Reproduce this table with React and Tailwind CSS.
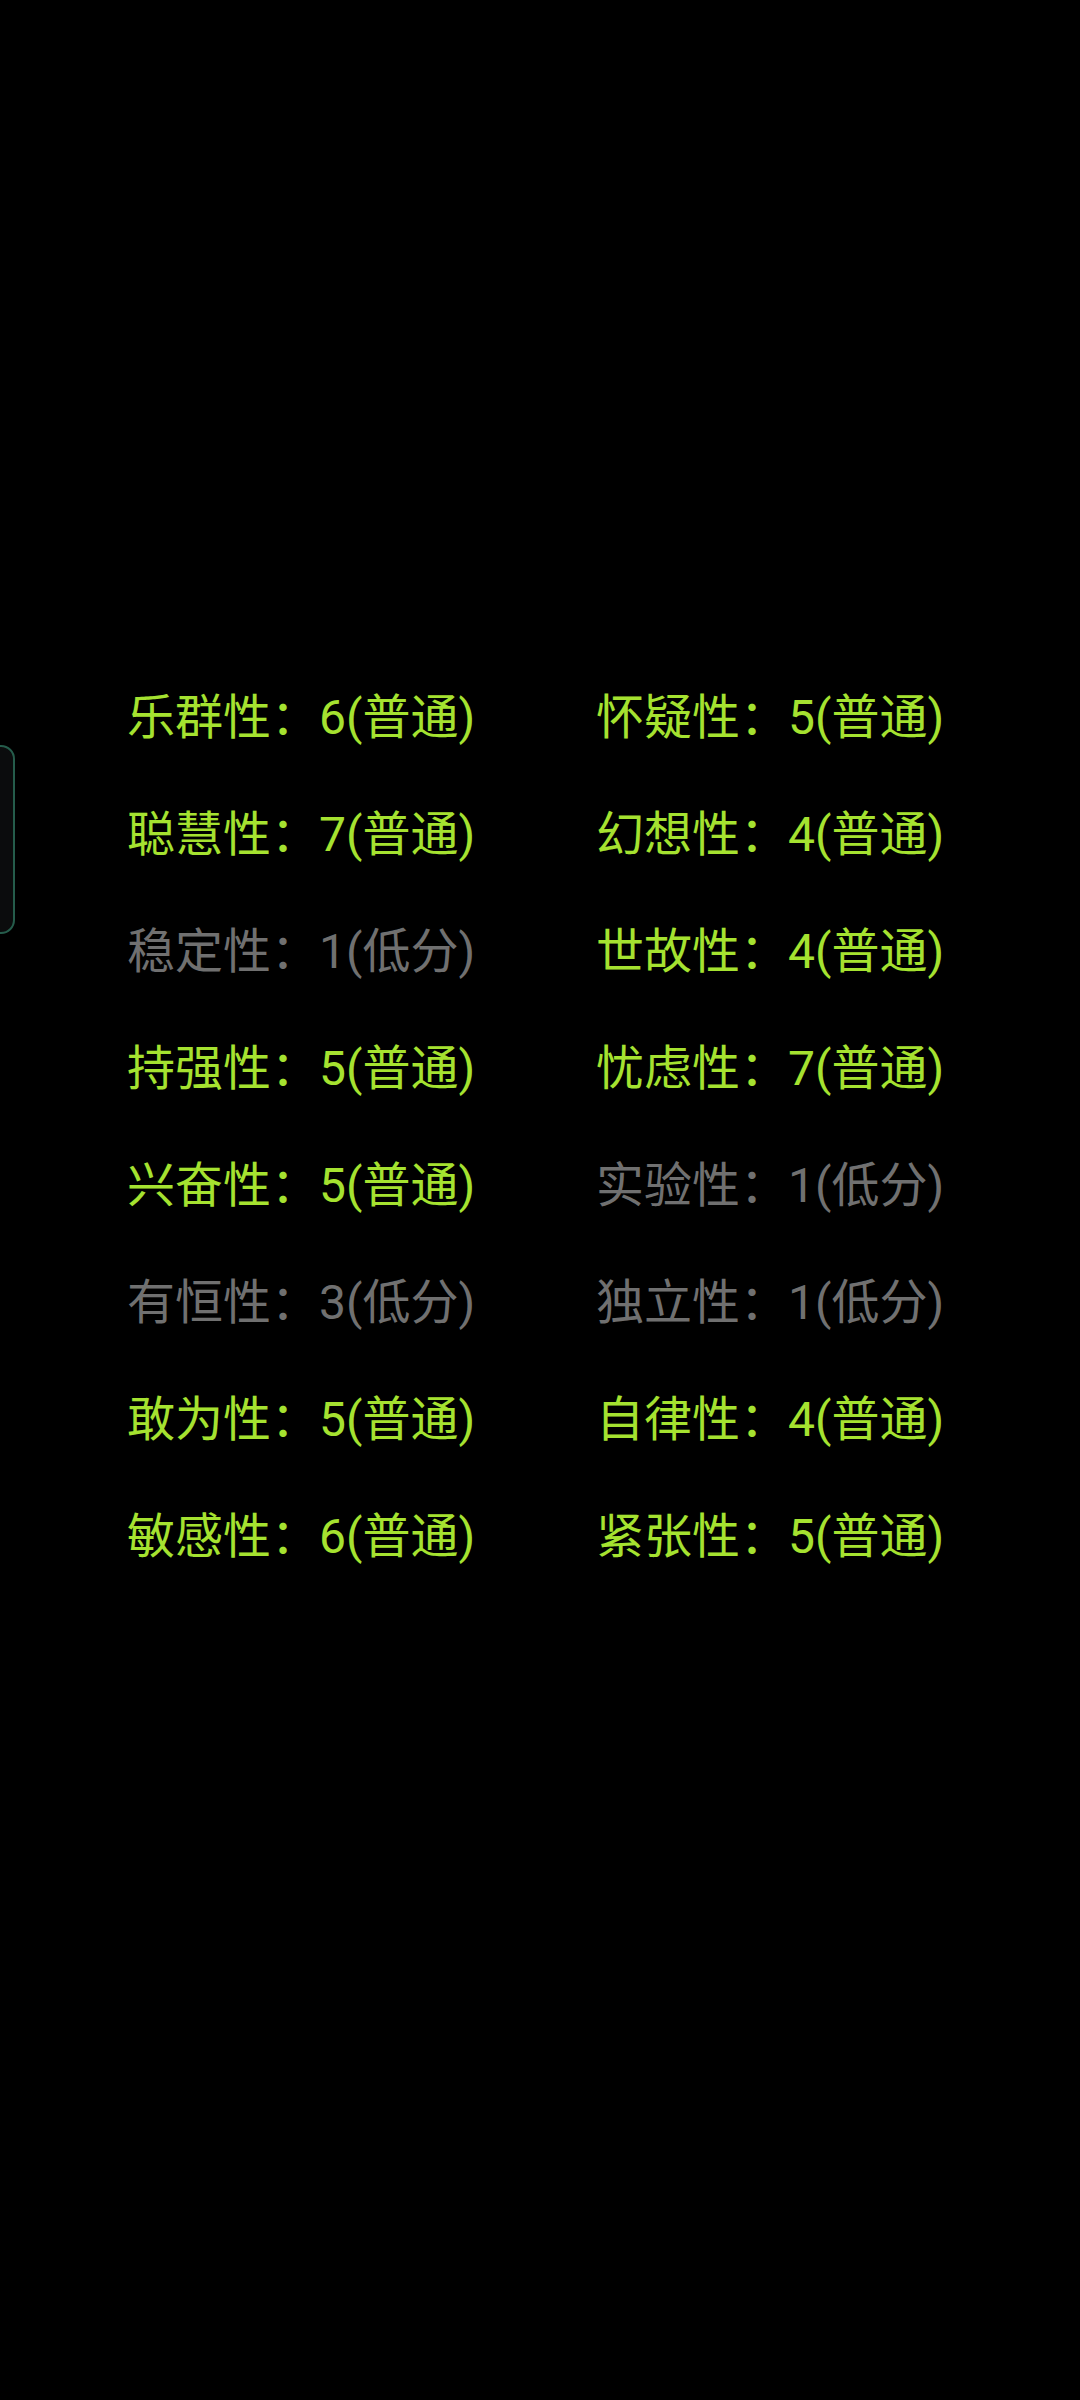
import React from 'react';

// 16PF trait scores, two columns
const traits = [
  ['乐群性', 6, '普通'], ['怀疑性', 5, '普通'],
  ['聪慧性', 7, '普通'], ['幻想性', 4, '普通'],
  ['稳定性', 1, '低分'], ['世故性', 4, '普通'],
  ['持强性', 5, '普通'], ['忧虑性', 7, '普通'],
  ['兴奋性', 5, '普通'], ['实验性', 1, '低分'],
  ['有恒性', 3, '低分'], ['独立性', 1, '低分'],
  ['敢为性', 5, '普通'], ['自律性', 4, '普通'],
  ['敏感性', 6, '普通'], ['紧张性', 5, '普通'],
];

const TraitItem = ({ name, score, level }) => {
  const low = level === '低分';
  return (
    <div
      className={`h-[117px] flex items-center whitespace-nowrap text-[48px] ${
        low ? 'text-[#707070]' : 'text-[#a5e230]'
      }`}
    >
      {name}：{score}({level})
    </div>
  );
};

export default function App() {
  return (
    <div
      className="relative w-[1080px] h-[2400px] bg-black overflow-hidden"
      style={{ fontFamily: 'Roboto, "Noto Sans CJK SC", sans-serif' }}
    >
      {/* ── EDGE_HANDLE ─────────────────────────────────────────────────── */}
      <div className="absolute left-[-20px] top-[745px] w-[35px] h-[189px] rounded-[14px] border-2 border-[#255c4b] bg-[#0b0c0d]" />

      {/* ── TRAIT_GRID ──────────────────────────────────────────────────── */}
      <div className="pt-[659px] pl-[127px]">
        <div className="grid grid-cols-[469px_469px]">
          {traits.map(([name, score, level]) => (
            <TraitItem key={name} name={name} score={score} level={level} />
          ))}
        </div>
      </div>
    </div>
  );
}
